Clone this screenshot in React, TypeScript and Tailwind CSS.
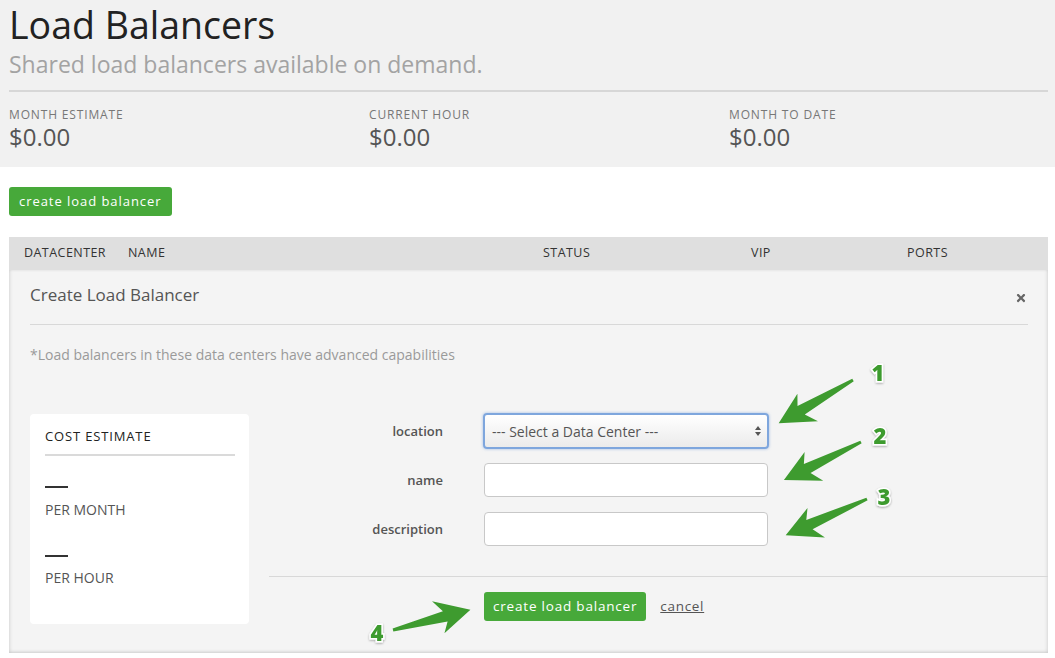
import { FaTimes } from "react-icons/fa";

type Stat = { label: string; value: string };

const stats: Stat[] = [
  { label: "Month Estimate", value: "$0.00" },
  { label: "Current Hour", value: "$0.00" },
  { label: "Month To Date", value: "$0.00" },
];

type Arrow = { x: number; y: number; len: number; angle: number };

// callout arrows drawn over the form: tail point, length and rotation
const arrows: Arrow[] = [
  { x: 853, y: 380, len: 86, angle: 149.8 },
  { x: 861, y: 442, len: 86, angle: 153.7 },
  { x: 867, y: 499, len: 89, angle: 156 },
  { x: 393, y: 630, len: 80, angle: -14.6 },
];

const numbers = [
  { n: "1", x: 878, y: 372 },
  { n: "2", x: 880, y: 435 },
  { n: "3", x: 884, y: 496 },
  { n: "4", x: 377, y: 632 },
];

function arrowPoints(len: number) {
  const L = len;
  return [
    [0, -1.5],
    [L - 27, -5.5],
    [L - 35, -18],
    [L, 0],
    [L - 31, 16],
    [L - 25, 5.5],
    [0, 1.5],
  ]
    .map((p) => p.join(","))
    .join(" ");
}

function Callouts() {
  return (
    <svg
      className="absolute left-0 top-0 pointer-events-none"
      width={1055}
      height={658}
      viewBox="0 0 1055 658"
    >
      <defs>
        <filter id="sh" x="-20%" y="-20%" width="140%" height="140%">
          <feDropShadow dx="0" dy="1" stdDeviation="0.8" floodColor="#000" floodOpacity="0.35" />
        </filter>
      </defs>
      {arrows.map((a, i) => (
        <polygon
          key={i}
          points={arrowPoints(a.len)}
          fill="#3e9b2f"
          transform={`translate(${a.x} ${a.y}) rotate(${a.angle})`}
        />
      ))}
      {numbers.map((t) => (
        <text
          key={t.n}
          x={t.x}
          y={t.y}
          textAnchor="middle"
          dominantBaseline="central"
          fontFamily="'Open Sans', 'DejaVu Sans', sans-serif"
          fontWeight={800}
          fontSize={22}
          fill="#3e9b2f"
          stroke="#fff"
          strokeWidth={3}
          paintOrder="stroke"
          filter="url(#sh)"
        >
          {t.n}
        </text>
      ))}
    </svg>
  );
}

function SelectArrows() {
  return (
    <svg width="8" height="12" viewBox="0 0 8 12" className="shrink-0">
      <path d="M4 1 L7 5 H1 Z" fill="#555" />
      <path d="M4 11 L7 7 H1 Z" fill="#555" />
    </svg>
  );
}

export default function App() {
  return (
    <div className="relative w-[1055px] h-[658px] overflow-hidden bg-white font-['Open_Sans','Liberation_Sans',sans-serif]">
      {/* page header */}
      <div className="bg-[#f1f1f1] h-[167px] pl-[9px] pr-[7px] pt-[3px]">
        <h1 className="text-[37.5px] leading-[44px] text-[#222]">Load Balancers</h1>
        <p className="mt-[2px] text-[23px] leading-[30px] text-[#a3a3a3]">
          Shared load balancers available on demand.
        </p>
        <div className="mt-[11px] border-t-2 border-[#d7d7d7]" />
        <div className="mt-[16px] grid grid-cols-[360px_360px_1fr]">
          {stats.map((s) => (
            <div key={s.label}>
              <div className="text-[12px] leading-[14px] uppercase tracking-[0.85px] text-[#777]">
                {s.label}
              </div>
              <div className="mt-[2px] text-[24px] leading-[26px] text-[#555]">{s.value}</div>
            </div>
          ))}
        </div>
      </div>

      <div className="px-[9px] pr-[7px]">
        <button className="mt-[20px] h-[29px] px-[10px] rounded-[3px] bg-[#47a93a] text-white text-[13px] tracking-[0.95px]">
          create load balancer
        </button>

        <div className="mt-[21px]">
          {/* table header */}
          <div className="flex items-center h-[33px] bg-[#dfdfdf] text-[12.5px] uppercase tracking-[0.45px] text-[#333]">
            <div className="w-[119px] pl-[15px]">Datacenter</div>
            <div className="w-[415px]">Name</div>
            <div className="w-[208px]">Status</div>
            <div className="w-[156px]">Vip</div>
            <div>Ports</div>
          </div>

          {/* create panel */}
          <div className="bg-[#f4f4f4] shadow-[inset_0_-2px_3px_rgba(0,0,0,0.08),inset_2px_0_3px_rgba(0,0,0,0.06),inset_-2px_0_3px_rgba(0,0,0,0.06)] pb-[29px]">
            <div className="px-[21px] pr-[20px] pt-[13px]">
              <div className="flex items-center justify-between">
                <h2 className="text-[17px] leading-[24px] text-[#555]">Create Load Balancer</h2>
                <FaTimes className="mt-[6px] mr-[1px] w-[12px] h-[12px] text-[#666]" />
              </div>
              <div className="mt-[17px] border-t border-[#d8d8d8]" />
              <p className="mt-[20px] text-[14px] leading-[20px] text-[#9a9a9a]">
                *Load balancers in these data centers have advanced capabilities
              </p>
            </div>

            <div className="mt-[48px] flex">
              <div className="ml-[21px] mt-[1px] w-[219px] rounded-[4px] bg-white px-[15px] pt-[13px] pb-[37px]">
                <div className="text-[13px] leading-[18px] uppercase tracking-[0.85px] text-[#222]">
                  Cost Estimate
                </div>
                <div className="mt-[9px] border-t-2 border-[#dadada] mr-[-1px]" />
                <div className="mt-[30px] w-[23px] border-t-2 border-[#333]" />
                <div className="mt-[13px] text-[14px] leading-[18px] uppercase text-[#555]">Per Month</div>
                <div className="mt-[36px] w-[23px] border-t-2 border-[#333]" />
                <div className="mt-[12px] text-[14px] leading-[18px] uppercase text-[#555]">Per Hour</div>
              </div>

              <div className="ml-[20px] flex-1">
                <div className="flex flex-col gap-[14px]">
                  <div className="flex items-center h-[36px]">
                    <label className="w-[174px] pt-[1px] text-right text-[13px] font-semibold text-[#555]">location</label>
                    <div className="ml-[40px] w-[286px] h-[36px] flex items-center justify-between rounded-[4px] border-2 border-[#7ea6dd] shadow-[0_0_3px_rgba(100,150,220,0.6)] bg-gradient-to-b from-white to-[#ebebeb] pl-[7px] pr-[5px]">
                      <span className="text-[14px] text-[#555]">--- Select a Data Center ---</span>
                      <SelectArrows />
                    </div>
                  </div>
                  <div className="flex items-center h-[34px]">
                    <label className="w-[174px] pt-[1px] text-right text-[13px] font-semibold text-[#555]">name</label>
                    <input className="ml-[41px] w-[284px] h-[34px] rounded-[4px] border border-[#c8c8c8] bg-white" />
                  </div>
                  <div className="flex items-center h-[34px] mt-[1px]">
                    <label className="w-[174px] pt-[1px] text-right text-[13px] font-semibold text-[#555]">description</label>
                    <input className="ml-[41px] w-[284px] h-[34px] rounded-[4px] border border-[#c8c8c8] bg-white" />
                  </div>
                </div>
                <div className="mt-[30px] border-t border-[#d8d8d8]" />
                <div className="mt-[15px] flex items-center">
                  <button className="ml-[215px] h-[29px] px-[9px] rounded-[3px] bg-[#47a93a] text-white text-[13.5px] tracking-[0.8px]">
                    create load balancer
                  </button>
                  <a className="ml-[14px] text-[13.5px] tracking-[0.7px] text-[#555] underline">cancel</a>
                </div>
              </div>
            </div>
          </div>
        </div>
      </div>

      <Callouts />
    </div>
  );
}
